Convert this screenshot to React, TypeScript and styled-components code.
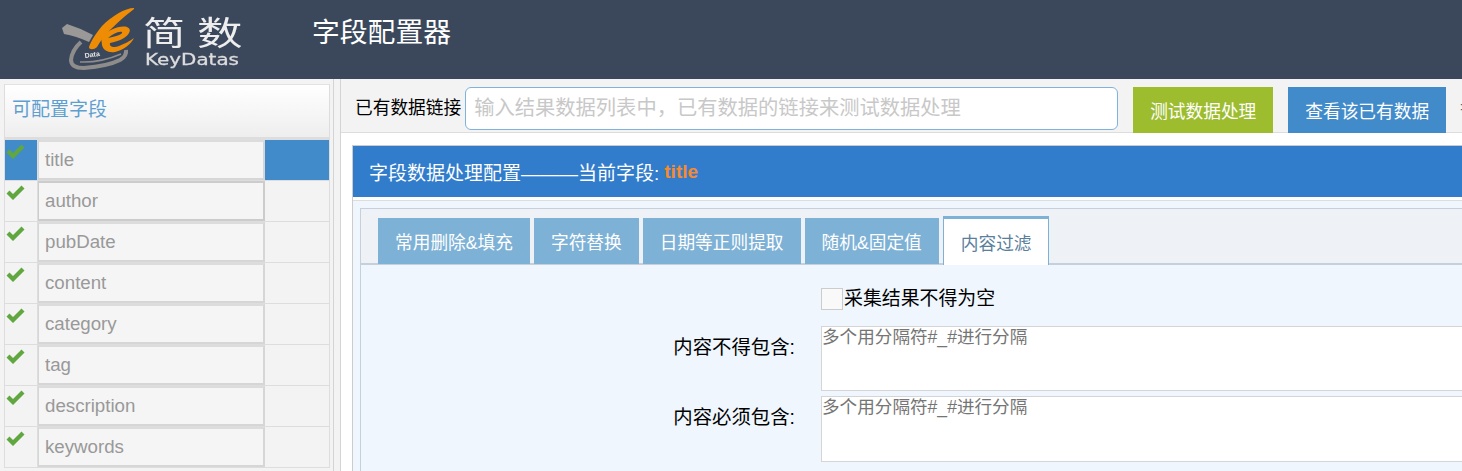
import React from "react";
import styled, { createGlobalStyle } from "styled-components";

const FONT = `"Liberation Sans", "Noto Sans CJK SC", sans-serif`;

const GlobalStyle = createGlobalStyle`
  html, body {
    margin: 0;
    padding: 0;
    background: #f3f3f3;
    overflow: hidden;
  }
  * {
    box-sizing: border-box;
  }
`;

const Page = styled.div`
  width: 1462px;
  height: 471px;
  overflow: hidden;
  font-family: ${FONT};
  font-size: 18.67px;
  display: flex;
  flex-direction: column;
`;

const Header = styled.header`
  height: 79px;
  flex: none;
  background: #3b485c;
  display: flex;
  align-items: center;
  padding-left: 55px;
`;

const LogoSvg = styled.svg`
  width: 195px;
  height: 70px;
  flex: none;
  filter: blur(0.35px);
`;

const Title = styled.h1`
  margin: 0 0 0 62px;
  font-size: 27.8px;
  font-weight: 400;
  color: #fff;
  line-height: 1;
  position: relative;
  top: -7px;
`;

const Body = styled.div`
  flex: 1;
  display: flex;
  min-height: 0;
`;

const Sidebar = styled.aside`
  width: 333px;
  flex: none;
  padding: 5px 3px 0 4px;
`;

const FieldBox = styled.div`
  border-top: 1px solid #e2e2e2;
  border-left: 1px solid #ddd;
  border-right: 1px solid #ddd;
`;

const FieldHead = styled.div`
  height: 55px;
  padding: 0 0 8px 7px;
  border-bottom: 3px solid #ddd;
  background: linear-gradient(to bottom, #fff, #eee);
  color: #5f9fd0;
  font-size: 19px;
  display: flex;
  align-items: center;
`;

const FieldRow = styled.div`
  height: 41px;
  display: grid;
  grid-template-columns: 33px 227px 64px;
  border-bottom: 1px solid #ddd;
`;

const CheckCell = styled.div<{ $active?: boolean }>`
  background: ${(p) => (p.$active ? "#428bca" : "transparent")};
  border-right: 1px solid #ddd;
  padding: 4px 0 0 1px;
`;

const FieldName = styled.div<{ $strong?: boolean }>`
  border: 2px solid ${(p) => (p.$strong ? "#ccc" : "#d6d6d6")};
  border-top-color: ${(p) => (p.$strong ? "#ccc" : "#dcdcdc")};
  border-left-width: 1px;
  background: #f5f5f5;
  color: #999;
  padding-left: 6px;
  font-size: 18.7px;
  display: flex;
  align-items: center;
`;

const ExtraCell = styled.div<{ $active?: boolean }>`
  background: ${(p) => (p.$active ? "#428bca" : "transparent")};
`;

const CheckIcon = styled.svg`
  display: block;
  width: 19px;
  height: 15px;
`;

const Splitter = styled.div`
  width: 8px;
  flex: none;
  border-left: 1px solid #d4d4d4;
  border-right: 1px solid #d4d4d4;
`;

const Main = styled.main`
  flex: 1;
  min-width: 0;
  background: #fff;
  overflow: hidden;
`;

const Toolbar = styled.div`
  height: 54px;
  background: #f3f3f3;
  border-bottom: 1px solid #ddd;
  padding: 8px 0 0 14px;
  display: flex;
  white-space: nowrap;
`;

const ToolLabel = styled.label`
  font-size: 17.7px;
  color: #000;
  line-height: 42px;
  flex: none;
`;

const UrlInput = styled.input`
  width: 653px;
  height: 43px;
  flex: none;
  margin: 0 15px 0 4px;
  padding: 0 8px;
  border: 1px solid #7fb2dc;
  border-radius: 6px;
  background: #fff;
  font-family: ${FONT};
  font-size: 20.3px;
  outline: none;

  &::placeholder {
    color: #c8c8c8;
    opacity: 1;
  }
`;

const ToolButton = styled.button<{ $color: string }>`
  height: 46px;
  flex: none;
  margin-right: 15px;
  padding: 0 17px;
  border: none;
  background: ${(p) => p.$color};
  color: #fff;
  font-family: ${FONT};
  font-size: 17.7px;
`;

const Clipped = styled.span`
  color: #666;
  font-size: 18px;
  line-height: 40px;
  margin-left: -1px;
`;

const Panel = styled.section`
  margin: 12px 0 0 11px;
  border-top: 1px solid #ccc;
  border-left: 1px solid #ccc;
  background: #f0f6fd;
`;

const PanelTitle = styled.div`
  height: 51px;
  background: #317dcc;
  color: #fff;
  font-size: 19px;
  padding-left: 16px;
  display: flex;
  align-items: center;
  white-space: nowrap;
`;

const CurrentField = styled.b`
  color: #f58a33;
  margin-left: 5px;
`;

const PanelBody = styled.div`
  border-top: 3px solid #fff;
  padding: 8px 0 0 7px;
  box-shadow: inset 0 1px 0 #ddd;
`;

const TabBox = styled.div`
  border-top: 1px solid #c5d0dc;
  border-left: 1px solid #c5d0dc;
  height: 280px;
  background: #eff6fd;
`;

const TabBar = styled.div`
  height: 56px;
  background: #eef1f6;
  border-bottom: 2px solid #c5d0dc;
  padding: 9px 0 0 17px;
  display: flex;
  gap: 4px;
`;

const Tab = styled.div<{ $active?: boolean }>`
  height: ${(p) => (p.$active ? "49px" : "46px")};
  margin-top: ${(p) => (p.$active ? "-2px" : "0")};
  padding: ${(p) => (p.$active ? "0 16px 0 17px" : "0 17px")};
  flex: none;
  display: flex;
  align-items: center;
  font-size: 17.7px;
  white-space: nowrap;
  color: ${(p) => (p.$active ? "#5a7f9c" : "#fff")};
  background: ${(p) => (p.$active ? "#fff" : "#7db1d6")};
  border: ${(p) => (p.$active ? "1px solid #7db1d6" : "none")};
  border-top-width: ${(p) => (p.$active ? "3px" : "0")};
  border-bottom: none;
  z-index: 1;
`;

const Form = styled.div`
  display: grid;
  grid-template-columns: 434px 1fr;
  column-gap: 26px;
  padding-top: 23px;
`;

const FormLabel = styled.label`
  grid-column: 1;
  text-align: right;
  color: #000;
  font-size: 19.4px;
  line-height: 26px;
  padding-top: 8px;
`;

const CheckLine = styled.label`
  grid-column: 2;
  display: flex;
  align-items: flex-start;
  height: 22px;
  margin-bottom: 16px;
  color: #000;
  font-size: 18.9px;
  line-height: 21px;
`;

const CheckBoxBlank = styled.span`
  width: 22px;
  height: 22px;
  flex: none;
  margin-right: 1px;
  border: 1px solid #ccc;
  background: #f9f9f9;
`;

const Area = styled.textarea`
  grid-column: 2;
  display: block;
  width: 900px;
  height: 65px;
  margin-bottom: 5px;
  padding: 0;
  border: 1px solid #d5d5d5;
  background: #fff;
  resize: none;
  outline: none;
  font-family: ${FONT};
  font-size: 17.6px;
  line-height: 20px;

  &:last-child {
    height: 66px;
  }

  &::placeholder {
    color: #757575;
    opacity: 1;
  }
`;

const fields = ["title", "author", "pubDate", "content", "category", "tag", "description", "keywords"];
const tabs = ["常用删除&填充", "字符替换", "日期等正则提取", "随机&固定值", "内容过滤"];

const Logo = () => (
  <LogoSvg viewBox="55 5 195 70">
    <path d="M62 28 L67 24 Q80 28 93 35 L89 42 Q76 36 64 34 Z" fill="#9b9997" />
    <path d="M81 42 Q72 50 71 60 Q71 68 84 68 Q108 66 120 60 Q127 56 126 50" fill="none" stroke="#8f8d8b" strokeWidth="4" />
    <path d="M80 62 Q100 63 121 54" fill="none" stroke="#8f8d8b" strokeWidth="1.5" />
    <text x="85" y="58" fontSize="7" fontWeight="700" fill="#e4e4e4" transform="rotate(-8 85 58)" fontFamily="Liberation Sans">
      Data
    </text>
    <path d="M134 8 C125 8 112 16 102 26 C96 33 91 41 89 47 C89 50 94 50 97 47 C100 42 104 36 108 32 C116 24 126 15 134 9 Z" fill="#ef8c05" />
    <path
      d="M101 37 C108 30 120 25 127 27 C132 29 130 34 124 38 C119 41 114 42 110 43 C109 47 114 48 119 46 C124 44 130 41 134 38 C131 44 124 50 115 52 C108 53 103 50 102 45 Z M108 38 C112 35 118 31 122 32 C123 34 118 36 108 38 Z"
      fill="#ef8c05"
      fillRule="evenodd"
    />
    <text transform="translate(143 45) scale(1.28 1)" fontSize="33" fill="#eee" fontFamily="Noto Sans CJK SC">
      简
    </text>
    <text transform="translate(197 45) scale(1.38 1)" fontSize="33" fill="#eee" fontFamily="Noto Sans CJK SC">
      数
    </text>
    <text x="145" y="65" fontSize="15" fill="#ddd" stroke="#ddd" strokeWidth="0.3" textLength="94" lengthAdjust="spacingAndGlyphs" fontFamily="DejaVu Sans">
      KeyDatas
    </text>
  </LogoSvg>
);

const App = () => {
  return (
    <Page>
      <GlobalStyle />
      <Header>
        <Logo />
        <Title>字段配置器</Title>
      </Header>
      <Body>
        <Sidebar>
          <FieldBox>
            <FieldHead>可配置字段</FieldHead>
            {fields.map((name, i) => (
              <FieldRow key={name}>
                <CheckCell $active={i === 0}>
                  <CheckIcon viewBox="0 0 19 15">
                    <path d="M0.5 8.5 L3.5 5.5 L7 9 L15.5 0.5 L18.5 3.5 L7 15 Z" fill="#5fa73e" />
                  </CheckIcon>
                </CheckCell>
                <FieldName $strong={i === 1}>{name}</FieldName>
                <ExtraCell $active={i === 0} />
              </FieldRow>
            ))}
          </FieldBox>
        </Sidebar>
        <Splitter />
        <Main>
          <Toolbar>
            <ToolLabel>已有数据链接</ToolLabel>
            <UrlInput placeholder="输入结果数据列表中，已有数据的链接来测试数据处理" />
            <ToolButton $color="#9dbd2f">测试数据处理</ToolButton>
            <ToolButton $color="#428bca">查看该已有数据</ToolButton>
            <Clipped>=</Clipped>
          </Toolbar>
          <Panel>
            <PanelTitle>
              字段数据处理配置———当前字段:<CurrentField>title</CurrentField>
            </PanelTitle>
            <PanelBody>
              <TabBox>
                <TabBar>
                  {tabs.map((t, i) => (
                    <Tab key={t} $active={i === 4}>
                      {t}
                    </Tab>
                  ))}
                </TabBar>
                <Form>
                  <CheckLine>
                    <CheckBoxBlank />
                    采集结果不得为空
                  </CheckLine>
                  <FormLabel>内容不得包含:</FormLabel>
                  <Area placeholder="多个用分隔符#_#进行分隔" />
                  <FormLabel>内容必须包含:</FormLabel>
                  <Area placeholder="多个用分隔符#_#进行分隔" />
                </Form>
              </TabBox>
            </PanelBody>
          </Panel>
        </Main>
      </Body>
    </Page>
  );
};

export default App;
